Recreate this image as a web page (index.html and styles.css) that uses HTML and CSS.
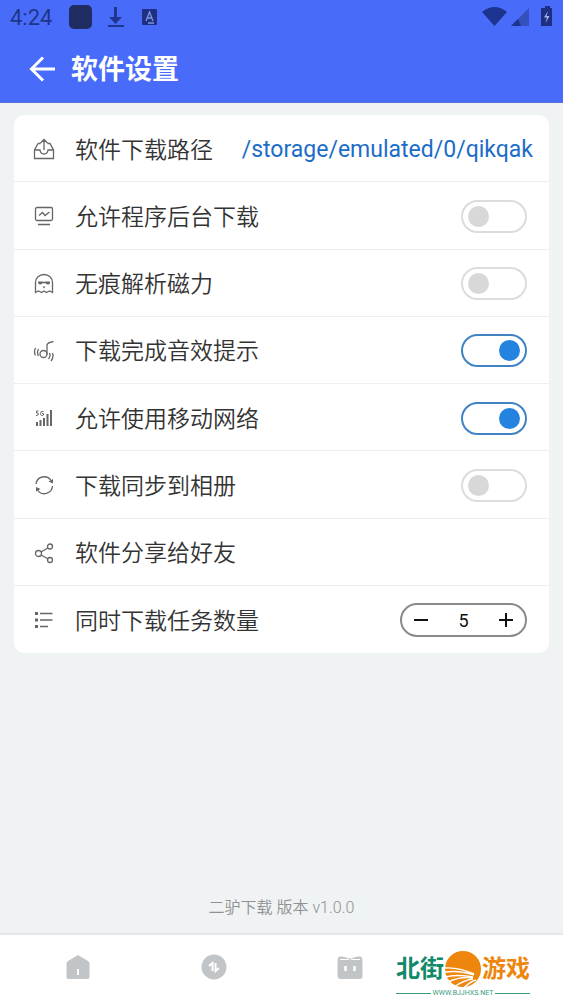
FILE: index.html
```html
<!DOCTYPE html>
<html lang="zh-CN">
<head>
<meta charset="utf-8">
<meta name="viewport" content="width=device-width, initial-scale=1">
<title>软件设置</title>
<link rel="stylesheet" href="styles.css">
</head>
<body>
<header class="top">
  <div class="status">
    <span class="clock">4:24</span>
    <svg class="status-left" width="92" height="26" viewBox="0 0 92 26" aria-hidden="true">
      <rect x="1" y="1" width="23" height="24" rx="5" fill="#1f2d62"/>
      <g fill="#1f3590"><path d="M46 3h3v10h5l-6.500 7L41 13h5z"/><rect x="40" y="21" width="16" height="2"/></g>
      <rect x="74" y="5" width="15" height="16" rx="1" fill="#1f3082"/>
      <path d="M78 17l3.500-9 3.500 9M79.300 14h4.500M80 19h6" fill="none" stroke="#8295e4" stroke-width="1.300"/>
    </svg>
    <svg class="status-right" width="72" height="22" viewBox="0 0 72 22" aria-hidden="true">
      <path d="M1 6Q13.500-4 26 6L13.500 20z" fill="#1c348f"/>
      <path d="M48 2v18H30z" fill="#3450bd"/><path d="M30 20l7-7 3 7z" fill="#1c348f"/>
      <path d="M62 2h2V0h5v2h2v18H60V2z" fill="#1c2f80"/>
      <path d="M67 5l-4 6.500h3L64.500 17l4-7h-3z" fill="#a9b7f2"/>
    </svg>
  </div>
  <div class="bar">
    <button class="back" type="button" aria-label="返回">
      <svg width="26" height="26" viewBox="0 0 26 26"><path d="M26 13H3M14 1.500L2.500 13 14 24.500" fill="none" stroke="#fff" stroke-width="3"/></svg>
    </button>
    <h1>软件设置</h1>
  </div>
</header>

<main>
  <ul class="card">
    <li class="row">
      <svg class="icon" viewBox="0 0 22 22"><path d="M5 5.500h2.500M14.500 5.500H17L20.500 12v8.500h-19V12L5 5.500M1.500 12H7q.5 4 4 4t4-4h5.500M11 12V2M7.500 5L11 1.500 14.500 5"/></svg>
      <span class="label">软件下载路径</span>
      <a class="path" href="#">/storage/emulated/0/qikqak</a>
    </li>
    <li class="row">
      <svg class="icon" viewBox="0 0 22 22"><rect x="2.500" y="2.500" width="17" height="13" rx="1.500"/><path d="M6 10.500l3.500-3 2.500 3L16.500 7M5 19.500h12"/></svg>
      <label class="label" for="background">允许程序后台下载</label>
      <input class="switch" type="checkbox" id="background">
    </li>
    <li class="row">
      <svg class="icon" viewBox="0 0 22 22"><path d="M2.500 19.500V9.500a8.500 8 0 0 1 17 0v10l-3-1.500-3 1.500-2.500-1.500-2.500 1.500-3-1.500zM9 9.500h4"/><path class="solid" d="M5 8.500h4.500v1.500q-1 1.500-2.500 1.500T5 9.500zM12.500 8.500H17v1.500q-.5 1.500-2 1.500t-2.500-1.500zM9.500 13.500h3l-1.500 2z"/></svg>
      <label class="label" for="private">无痕解析磁力</label>
      <input class="switch" type="checkbox" id="private">
    </li>
    <li class="row">
      <svg class="icon" viewBox="0 0 22 22"><circle cx="10.500" cy="14" r="3.500"/><path d="M14 14.500V5q.5-2.500 6.500-3.500M5.500 9q-2 3.500 0 7M2.500 8q-2 4 0 7.500M16.500 13q1.500 3-1 6M19.500 13q1.500 4-1.500 8"/></svg>
      <label class="label" for="sound">下载完成音效提示</label>
      <input class="switch" type="checkbox" id="sound" checked>
    </li>
    <li class="row">
      <svg class="icon" viewBox="0 0 22 22"><path class="bars" d="M4 19v-4M7.500 19v-6M11 19v-8M14.500 19V7M18 19V3"/><path class="fine" d="M5.500 4H3.500v2q2-.5 2 1T3 8.500M10.500 4.500q-3-1-3 2t3 1.500V6.500H9"/></svg>
      <label class="label" for="mobile">允许使用移动网络</label>
      <input class="switch" type="checkbox" id="mobile" checked>
    </li>
    <li class="row">
      <svg class="icon" viewBox="0 0 22 22"><path d="M3 10A8.200 8.200 0 0 1 18 6.500M19.500 12A8.200 8.200 0 0 1 4.500 16"/><path class="solid" d="M20 5v4.500l-4.500-2zM3 17.500V13l4.500 2z"/></svg>
      <label class="label" for="album">下载同步到相册</label>
      <input class="switch" type="checkbox" id="album">
    </li>
    <li class="row">
      <svg class="icon" viewBox="0 0 22 22"><circle cx="5.500" cy="11.500" r="3"/><circle cx="17" cy="4.500" r="2.500"/><circle cx="17" cy="18" r="2.500"/><path d="M8 10l6.800-4M8 13l6.800 3.700"/></svg>
      <span class="label">软件分享给好友</span>
    </li>
    <li class="row">
      <svg class="icon" viewBox="0 0 22 22"><path d="M7 4.500h12.500M7 11h12.500M7 17.500h8"/><path class="solid" d="M2 3h3v3H2zM2 9.500h3v3H2zM2 16h3v3H2z"/></svg>
      <span class="label">同时下载任务数量</span>
      <div class="stepper">
        <button type="button" aria-label="减少"><svg width="16" height="16" viewBox="0 0 16 16"><path d="M1 8h14"/></svg></button>
        <output>5</output>
        <button type="button" aria-label="增加"><svg width="16" height="16" viewBox="0 0 16 16"><path d="M1 8h14M8 1v14"/></svg></button>
      </div>
    </li>
  </ul>
  <p class="version">二驴下载 版本 v1.0.0</p>
</main>

<nav class="tabs">
  <a href="#" aria-label="首页"><svg width="26" height="26" viewBox="0 0 26 26"><path d="M13 1l10 6q1.500 1 1.500 3v13q0 2-2 2h-19q-2 0-2-2V10q0-2 1.500-3z" fill="#c1c5c8"/><path d="M13 15v6" stroke="#fff" stroke-width="2"/></svg></a>
  <a href="#" aria-label="传输"><svg width="26" height="26" viewBox="0 0 26 26"><circle cx="13" cy="13" r="12.500" fill="#c1c5c8"/><path d="M8 12l3.500-3v8M14.500 9v8l3.500-3" fill="none" stroke="#fff" stroke-width="2"/></svg></a>
  <a href="#" aria-label="工具"><svg width="26" height="26" viewBox="0 0 26 26"><path d="M2.500 2.500Q8 2 10 4h6q2-2 7.500-1.500Q25.500 3 25.500 7H.5q0-4 2-4.500z" fill="#c1c5c8"/><rect x=".5" y="6" width="25" height="19" rx="3" fill="#c1c5c8"/><path d="M3 5.500h8.500L13 2l1.500 3.500H23" fill="none" stroke="#fff"/><path d="M8.500 12v5M17.500 12v5" stroke="#fff" stroke-width="2.500"/></svg></a>
  <a class="brand" href="#">
    <span class="brand-name">
      <span>北街</span>
      <svg width="36" height="38" viewBox="0 0 36 38" aria-hidden="true">
        <circle cx="18" cy="19" r="18" fill="#ee850d"/>
        <path d="M0 18q13-1 29 6M0 22q15-2 29 3M0 27q15-3 28 0M3 32q13-6 25-4M9 37q10-7 19-8M18 39q6-7 13-9" fill="none" stroke="#fff" stroke-width="1.500"/>
      </svg>
      <span class="warm">游戏</span>
    </span>
    <span class="brand-url">WWW.BJJHXS.NET</span>
  </a>
</nav>
</body>
</html>
```

FILE: styles.css
```css
* { box-sizing: border-box; }

body {
  margin: 0;
  min-height: 100vh;
  display: flex;
  flex-direction: column;
  background: #eff3f3;
  color: #333;
  font-family: Roboto, "Noto Sans CJK SC", sans-serif;
}

button { padding: 0; border: 0; background: none; }
a { text-decoration: none; }
svg { display: block; }

.top {
  background: #486cf9;
  border-bottom: 1px solid #5573d8;
}

.status {
  display: flex;
  align-items: center;
  height: 34px;
  padding: 0 10px;
}
.clock { color: #1e3689; font-size: 22px; }
.status-left { margin-left: 16px; }
.status-right { margin-left: auto; }

.bar {
  display: flex;
  align-items: center;
  gap: 16px;
  height: 68px;
  padding: 2px 29px 0;
}
h1 {
  margin: 0;
  padding-top: 2px;
  color: #fff;
  font-size: 27px;
  line-height: 40px;
  font-weight: 700;
}

main {
  flex: 1;
  display: flex;
  flex-direction: column;
  padding: 12px 14px;
}

.card {
  display: grid;
  grid-auto-rows: 1fr;
  min-height: 538px;
  margin: 0;
  padding: 0;
  list-style: none;
  background: #fff;
  border-radius: 10px;
}
.row {
  display: flex;
  align-items: center;
  padding: 2px 22px 0 19px;
  border-bottom: 1px solid #eee;
}
.row:last-child { border-bottom: 0; }

.icon {
  flex: none;
  width: 22px;
  height: 22px;
  margin-right: 20px;
  fill: none;
  stroke: #666;
  stroke-width: 1.3;
}
.icon .solid { fill: #666; stroke: none; }
.icon .bars { stroke-width: 2; }
.icon .fine { stroke-width: 1; }

.label {
  padding-bottom: 3px;
  font-size: 23px;
  font-weight: 350;
  white-space: nowrap;
}
.path {
  margin: 0 -6px 0 auto;
  color: #1b6dc8;
  font-size: 23px;
}

.switch {
  appearance: none;
  flex: none;
  display: flex;
  align-items: center;
  width: 66px;
  height: 33px;
  margin: 0 0 0 auto;
  padding: 0 5px;
  border: 2px solid #dcdcdc;
  border-radius: 17px;
  background: #fff;
}
.switch::before {
  content: "";
  width: 21px;
  height: 21px;
  border-radius: 50%;
  background: #d8d8d8;
}
.switch:checked { justify-content: flex-end; border-color: #3f83c4; }
.switch:checked::before { background: #2583e0; }

.stepper {
  display: flex;
  align-items: center;
  justify-content: space-between;
  width: 127px;
  height: 34px;
  margin-left: auto;
  padding: 0 11px;
  border: 2px solid #8a8a8a;
  border-radius: 17px;
  color: #111;
  font-size: 18px;
}
.stepper svg { fill: none; stroke: #111; stroke-width: 2; }

.version {
  margin: auto 0 0;
  color: #8f9292;
  font-size: 16px;
  font-weight: 350;
  line-height: 26px;
  text-align: center;
}

.tabs {
  display: grid;
  grid-template-columns: repeat(3, 136fr) 145fr;
  align-items: center;
  justify-items: center;
  height: 66px;
  padding-left: 10px;
  background: #fff;
  border-top: 2px solid #e5e8e8;
}

.brand {
  display: flex;
  flex-direction: column;
  align-items: stretch;
  justify-self: start;
  margin-left: -22px;
  padding-top: 14px;
}
.brand-name {
  display: flex;
  align-items: center;
  gap: 1px;
  color: #11896b;
  font-size: 24px;
  font-weight: 700;
  line-height: 36px;
}
.warm { color: #ee850d; }
.brand-url {
  display: flex;
  align-items: center;
  gap: 2px;
  color: #3a9b82;
  font-size: 7px;
  line-height: 10px;
}
.brand-url::before,
.brand-url::after {
  content: "";
  flex: 1;
  height: 1px;
  background: #3a9b82;
}
```
